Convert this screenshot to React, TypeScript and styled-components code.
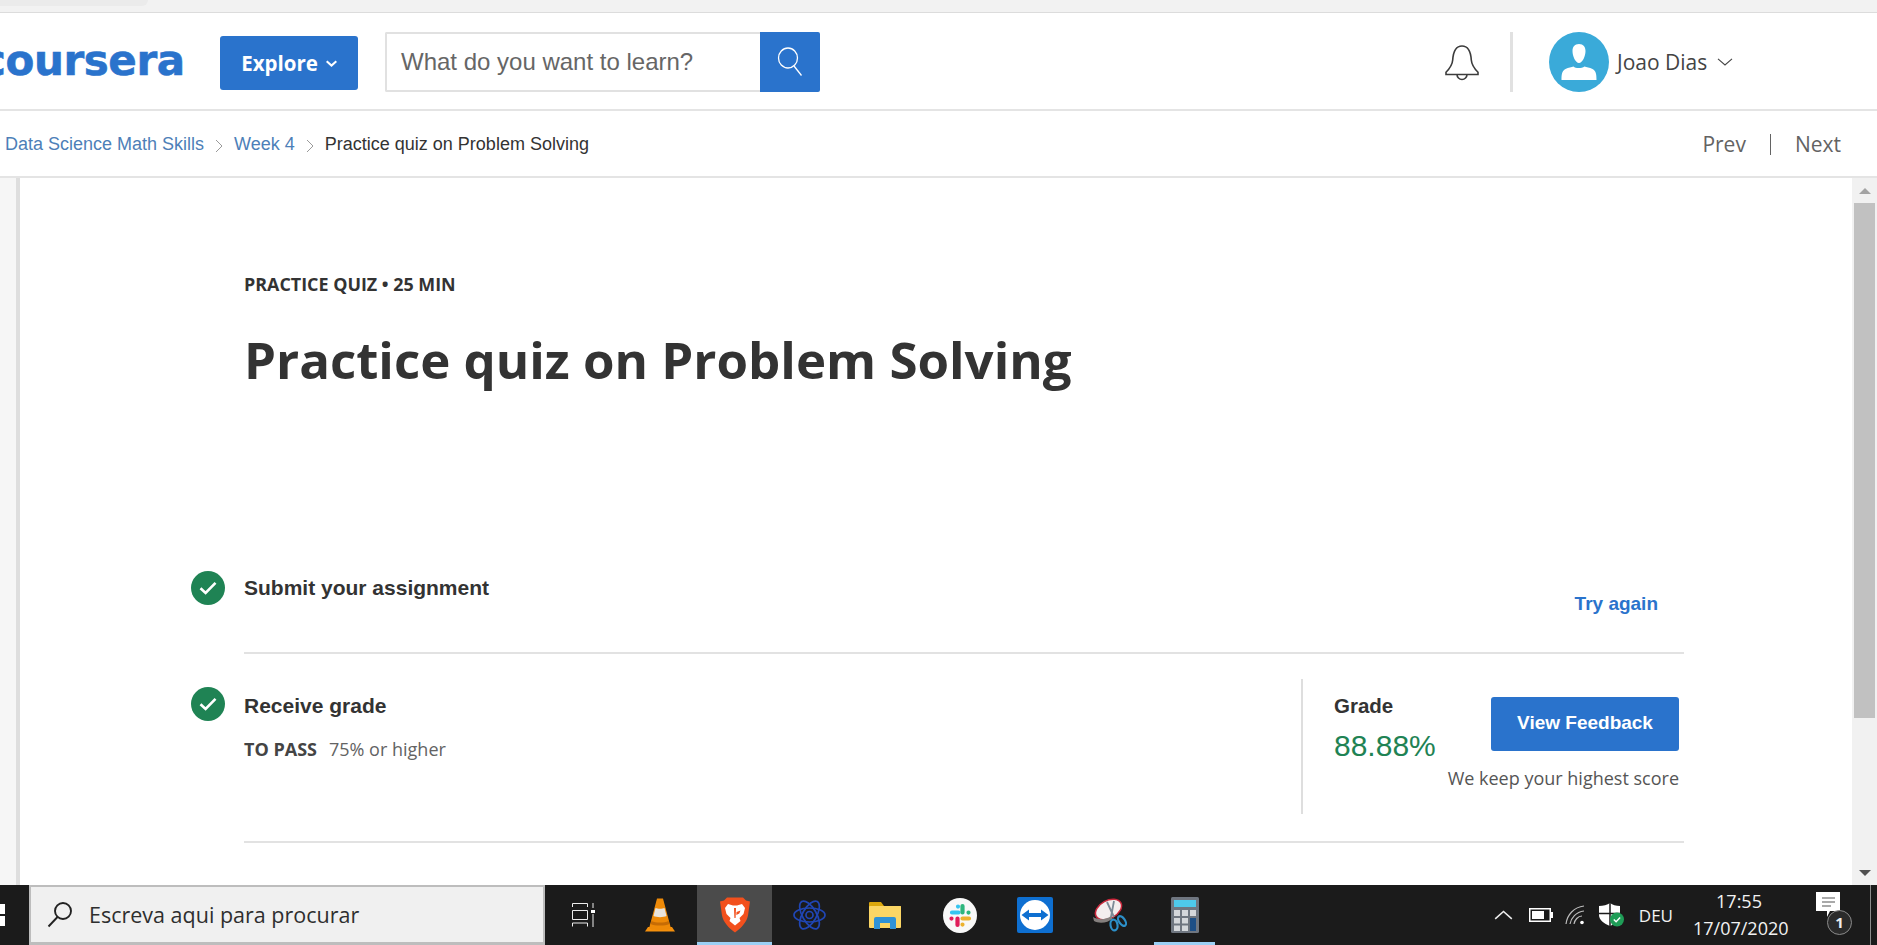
import React from 'react';
import styled, { createGlobalStyle } from 'styled-components';

const GlobalStyle = createGlobalStyle`
	html, body {
		margin: 0;
		padding: 0;
		background: #fff;
		overflow: hidden;
	}
	* {
		box-sizing: border-box;
	}
`;

const sans = `'Open Sans', sans-serif`;
const arial = `'Liberation Sans', Arial, sans-serif`;
const blue = '#2a73cc';
const green = '#1f8354';

const Page = styled.div`
	width: 1877px;
	height: 945px;
	display: flex;
	flex-direction: column;
	overflow: hidden;
`;

const BrowserStrip = styled.div`
	height: 13px;
	flex: none;
	background: #f2f2f2;
	border-bottom: 1px solid #dcdcdc;
`;

const TabStub = styled.div`
	width: 148px;
	height: 6px;
	background: #ebebeb;
	border-radius: 0 0 6px 0;
`;

const Header = styled.header`
	height: 98px;
	flex: none;
	display: flex;
	align-items: flex-start;
	padding-top: 19px;
	border-bottom: 2px solid #e4e4e4;
`;

const Logo = styled.div`
	width: 220px;
	height: 60px;
	flex: none;
	overflow: hidden;
	white-space: nowrap;
	font-family: 'DejaVu Sans', sans-serif;
	font-weight: 700;
	font-size: 42px;
	line-height: 58px;
	letter-spacing: -0.4px;
	color: ${blue};
	-webkit-text-stroke: 0.6px ${blue};
	text-indent: -19px;
`;

const ExploreButton = styled.button`
	width: 138px;
	height: 54px;
	margin: 4px 27px 0 0;
	border: 0;
	border-radius: 3px;
	background: ${blue};
	color: #fff;
	font-family: ${sans};
	font-weight: 700;
	font-size: 20.500px;
	display: flex;
	align-items: center;
	justify-content: center;
	gap: 8px;
	padding: 0;
`;

const SearchBox = styled.div`
	width: 435px;
	height: 60px;
	display: flex;
	flex: none;
`;

const SearchField = styled.div`
	flex: 1;
	border: 2px solid #e1e1e1;
	border-right: 0;
	border-radius: 2px 0 0 2px;
	padding-left: 14px;
	display: flex;
	align-items: center;
	font-family: ${arial};
	font-size: 24px;
	color: #666;
`;

const SearchButton = styled.div`
	width: 60px;
	background: ${blue};
	border-radius: 0 2px 2px 0;
	display: flex;
	align-items: center;
	justify-content: center;
`;

const Account = styled.div`
	margin-left: 624px;
	display: flex;
	align-items: center;
	height: 60px;
`;

const BellWrap = styled.div`
	width: 36px;
	height: 38px;
	margin-top: 2px;
`;

const HeaderRule = styled.div`
	width: 3px;
	height: 60px;
	margin: 0 36px 0 30px;
	background: #e1e1e1;
`;

const UserName = styled.span`
	font-family: ${sans};
	font-size: 21px;
	color: #444;
	margin: 0 10px 0 8px;
`;

const Crumbs = styled.nav`
	height: 67px;
	flex: none;
	display: flex;
	align-items: center;
	padding: 1px 36px 0 5px;
	border-bottom: 2px solid #e4e4e4;
	font-family: ${arial};
	font-size: 18px;
`;

const CrumbLink = styled.a`
	color: #4d7fb8;
`;

const CrumbCurrent = styled.span`
	color: #333;
`;

const CrumbSep = styled.span`
	width: 30px;
	display: flex;
	justify-content: center;
	padding-top: 3px;
`;

const Pager = styled.div`
	margin-left: auto;
	display: flex;
	align-items: center;
	font-family: ${sans};
	font-size: 21px;
	color: #636363;
`;

const PagerBar = styled.span`
	width: 1px;
	height: 21px;
	background: #636363;
	margin: 0 24px;
`;

const Body = styled.div`
	flex: 1;
	min-height: 0;
	display: flex;
`;

const Rail = styled.div`
	width: 20px;
	flex: none;
	background: #f6f6f6;
	border-right: 4px solid #dedede;
`;

const Main = styled.main`
	flex: 1;
	padding: 96px 168px 0 171px;
`;

const Intro = styled.div`
	padding-left: 53px;
	height: 297px;
`;

const Kicker = styled.div`
	font-family: ${sans};
	font-weight: 700;
	font-size: 17.900px;
	line-height: 20px;
	color: #333;
`;

const Title = styled.h1`
	margin: 29px 0 0;
	font-family: ${sans};
	font-weight: 700;
	font-size: 51px;
	line-height: 72px;
	color: #333;
`;

const Step = styled.section`
	display: flex;
	gap: 19px;
`;

const CheckDot = styled.div<{ $top: number }>`
	width: 34px;
	height: 34px;
	flex: none;
	margin-top: ${(p) => p.$top}px;
	border-radius: 50%;
	background: ${green};
	display: flex;
	align-items: center;
	justify-content: center;
`;

const StepBody = styled.div<{ $height: number }>`
	flex: 1;
	height: ${(p) => p.$height}px;
	border-bottom: 2px solid #e2e2e2;
	display: flex;
	justify-content: space-between;
`;

const StepTitle = styled.div<{ $top: number }>`
	margin-top: ${(p) => p.$top}px;
	font-family: ${arial};
	font-weight: 700;
	font-size: 21px;
	line-height: 24px;
	color: #333;
`;

const TryAgain = styled.a`
	margin: 21px 26px 0 0;
	font-family: ${arial};
	font-weight: 700;
	font-size: 19px;
	line-height: 24px;
	color: ${blue};
`;

const PassLine = styled.div`
	margin-top: 19px;
	font-family: ${sans};
	font-size: 18px;
	line-height: 24px;
	color: #636363;
`;

const PassLabel = styled.b`
	color: #444;
	margin-right: 12px;
`;

const GradePanel = styled.div`
	width: 383px;
	height: 135px;
	margin-top: 25px;
	padding: 0 5px 0 31px;
	border-left: 2px solid #dedede;
	display: flex;
	justify-content: space-between;
`;

const GradeLabel = styled.div`
	margin-top: 15px;
	font-family: ${arial};
	font-weight: 700;
	font-size: 20.500px;
	line-height: 24px;
	color: #333;
`;

const GradeValue = styled.div`
	margin-top: 10px;
	font-family: ${arial};
	font-size: 30px;
	line-height: 36px;
	color: ${green};
`;

const GradeAction = styled.div`
	display: flex;
	flex-direction: column;
	align-items: flex-end;
	padding-top: 18px;
`;

const FeedbackButton = styled.button`
	width: 188px;
	height: 54px;
	border: 0;
	padding: 0 0 2px;
	border-radius: 3px;
	background: ${blue};
	color: #fff;
	font-family: ${arial};
	font-weight: 700;
	font-size: 19px;
`;

const KeepNote = styled.div`
	margin-top: 15px;
	font-family: ${sans};
	font-size: 18px;
	line-height: 24px;
	white-space: nowrap;
	color: #555;
`;

const Scrollbar = styled.div`
	width: 25px;
	flex: none;
	background: #f1f1f1;
	display: flex;
	flex-direction: column;
	align-items: center;
	justify-content: space-between;
	position: relative;
`;

const ScrollArrow = styled.div<{ $down?: boolean }>`
	height: 25px;
	display: flex;
	align-items: center;
	&::before {
		content: '';
		border-left: 6px solid transparent;
		border-right: 6px solid transparent;
		${(p) => (p.$down ? 'border-top: 6px solid #505050;' : 'border-bottom: 6px solid #a3a3a3;')}
	}
`;

const ScrollThumb = styled.div`
	position: absolute;
	top: 25px;
	left: 2px;
	width: 21px;
	height: 515px;
	background: #c1c1c1;
`;

const Taskbar = styled.footer`
	height: 60px;
	flex: none;
	background: #1b1b1b;
	display: flex;
	align-items: stretch;
	font-family: ${sans};
	color: #f2f2f2;
	position: relative;
`;

const StartStub = styled.div`
	width: 29px;
	flex: none;
	display: flex;
	align-items: center;
`;

const TaskSearch = styled.div`
	width: 516px;
	flex: none;
	background: #f0f0f0;
	border: 2px solid #bdbdbd;
	border-bottom-width: 3px;
	display: flex;
	align-items: center;
	padding-left: 16px;
	gap: 16px;
	font-size: 21.500px;
	color: #2e2e2e;
`;

const TaskViewSlot = styled.div`
	width: 77px;
	flex: none;
	display: flex;
	align-items: center;
	justify-content: center;
`;

const AppSlot = styled.div<{ $active?: boolean; $open?: boolean; $inset?: number }>`
	width: ${(p) => 75 - 2 * (p.$inset || 0)}px;
	margin: 0 ${(p) => p.$inset || 0}px;
	flex: none;
	display: flex;
	align-items: center;
	justify-content: center;
	padding-top: 3px;
	background: ${(p) => (p.$active ? '#4b4b4b' : 'transparent')};
	border-bottom: 3px solid ${(p) => (p.$open ? '#9bd0f5' : 'transparent')};
`;

const Tray = styled.div`
	margin-left: auto;
	display: flex;
	align-items: center;
	padding-right: 24px;
`;

const TrayIcon = styled.div<{ $gap: number }>`
	display: flex;
	margin-right: ${(p) => p.$gap}px;
`;

const TrayLang = styled.span`
	font-size: 17px;
	margin-right: 20px;
`;

const Clock = styled.div`
	width: 92px;
	text-align: center;
	font-size: 18px;
	line-height: 27px;
	white-space: nowrap;
	margin-right: 31px;
`;

const Notify = styled.div`
	width: 37px;
	height: 46px;
	position: relative;
`;

const NotifyBadge = styled.div`
	position: absolute;
	left: 11px;
	top: 18px;
	width: 25px;
	height: 25px;
	border-radius: 50%;
	background: #2b2b2b;
	border: 1.5px solid #8a8a8a;
	font-size: 15px;
	font-weight: 700;
	line-height: 22px;
	text-align: center;
	color: #eee;
`;

const EdgeLine = styled.div`
	position: absolute;
	right: 6px;
	top: 0;
	bottom: 0;
	width: 1px;
	background: #8c8c8c;
`;

const Check = () => (
	<svg width='20' height='16' viewBox='0 0 20 16' fill='none' stroke='#fff' strokeWidth='2.6'>
		<path d='M2.5 8.2 7.6 13 17.5 2.8' />
	</svg>
);

const Chevron = ({ w, h, color, sw, up }: { w: number; h: number; color: string; sw: number; up?: boolean }) => (
	<svg width={w} height={h} viewBox='0 0 16 8' fill='none' stroke={color} strokeWidth={sw}>
		<path d={up ? 'M1 7.200 8 1l7 6.200' : 'M1 .8 8 7 15 .8'} />
	</svg>
);

const Loupe = () => (
	<svg width='26' height='30' viewBox='0 0 26 30' fill='none' stroke='#fff' strokeWidth='1.300'>
		<ellipse cx='11' cy='11' rx='9.500' ry='10' />
		<path d='M17 19l7.500 9.500' />
	</svg>
);

const Bell = () => (
	<svg width='36' height='38' viewBox='0 0 36 38' fill='none' stroke='#3c3c3c' strokeWidth='1.6'>
		<path d='M2 30.500h32v-2.200c-3.500-3.600-6.300-7-6.700-12.300C26.800 8.500 24.500 2 18 2S9.200 8.500 8.700 16c-.4 5.300-3.200 8.700-6.700 12.300z' />
		<path d='M13 30.500a5 5 0 0 0 10 0' />
	</svg>
);

const Avatar = () => (
	<svg width='60' height='60' viewBox='0 0 60 60'>
		<circle cx='30' cy='30' r='30' fill='#3aaad9' />
		<path
			fill='#fff'
			d='M30 12c-4.500 0-6.500 3-6.500 7 0 5 3 12 6.500 12s6.500-7 6.500-12c0-4-2-7-6.500-7zM12.500 48c0-6 .5-9 4-11 3-1.500 6-2 8-2.500 2 2 8 2 11 0 2 .5 5 1 8 2.500 3.500 2 4 5 4 11z'
		/>
	</svg>
);

const CrumbArrow = () => (
	<svg width='8' height='14' viewBox='0 0 8 14' fill='none' stroke='#9a9a9a' strokeWidth='1'>
		<path d='M1 1l6 6-6 6' />
	</svg>
);

const LoupeDark = () => (
	<svg width='26' height='27' viewBox='0 0 26 27' fill='none' stroke='#222' strokeWidth='1.900'>
		<circle cx='16' cy='10' r='8' />
		<path d='M10.500 16 1.500 25.500' />
	</svg>
);

const WinStub = () => (
	<svg width='5' height='22' viewBox='0 0 5 22' fill='#fff'>
		<rect y='0' width='5' height='10' />
		<rect y='12' width='5' height='10' />
	</svg>
);

const TaskView = () => (
	<svg width='24' height='24' viewBox='0 0 24 24' fill='none' stroke='#eee' strokeWidth='1'>
		<path d='M.5 4V.5h15V4M.5 7.500h15v9H.5zM.5 23.500V20h15v3.500M21 0v5M21 11v13' />
		<rect x='19' y='7' width='4' height='3' fill='#fff' stroke='none' />
	</svg>
);

const Vlc = () => (
	<svg width='30' height='34' viewBox='0 0 30 34'>
		<path fill='#f5900c' d='M3 29h24l3 4.500H0z' />
		<path fill='#ee8a08' d='M12 .5h6l8 30c-3 2-19 2-22 0z' />
		<path fill='#e9e4dc' d='M10.500 10c2 1 7 1 9 0l2 8c-3 1.500-10 1.500-13 0z' />
		<path fill='#c66c05' d='M6.500 23c4 2 13 2 17 0l.8 3c-4 2-14.600 2-18.600 0z' />
	</svg>
);

const Brave = () => (
	<svg width='34' height='36' viewBox='0 0 34 36'>
		<path fill='#f2501d' d='M9 .5h16l3 3 4 1-2 14c-1 6-7 13-13 17C11 31.500 5 24.500 4 18.500l-2-14 4-1z' />
		<path
			fill='#fff'
			d='M10 7l5 1.500h4L24 7l3 4-1.500 6-4 4 1 3-5.500 4.500L11.500 24l1-3-4-4L7 11zM11.500 13.500l4 1.500.2 3-3-1.500zM22.500 13.500l-4 1.500-.2 3 3-1.500z'
		/>
		<path fill='#f2501d' d='M16 11h2l-.4 10h-1.200z' />
	</svg>
);

const Atom = () => (
	<svg width='33' height='30' viewBox='0 0 33 30' fill='none' stroke='#2046b4' strokeWidth='1.700'>
		<ellipse cx='16.500' cy='15' rx='15.500' ry='7' />
		<ellipse cx='16.500' cy='15' rx='15.500' ry='7' transform='rotate(60 16.500 15)' />
		<ellipse cx='16.500' cy='15' rx='15.500' ry='7' transform='rotate(120 16.500 15)' />
		<circle cx='16.500' cy='15' r='3.500' />
	</svg>
);

const Folder = () => (
	<svg width='32' height='27' viewBox='0 0 32 27'>
		<path fill='#dba70d' d='M0 1a1 1 0 0 1 1-1h11l3 4h17v6H0z' />
		<rect y='4' width='32' height='22' rx='1' fill='#fbd665' />
		<path fill='#2f92d6' d='M5 27V17a2 2 0 0 1 2-2h18a2 2 0 0 1 2 2v10h-6v-6H11v6z' />
	</svg>
);

const Slack = () => (
	<svg width='34' height='35' viewBox='0 0 34 35'>
		<ellipse cx='17' cy='17.500' rx='17' ry='17.500' fill='#f8f8f8' />
		<g fill='none' strokeWidth='4.200' strokeLinecap='round'>
			<path stroke='#36c5f0' d='M9 14.500h6.500M15 8.500v.1' />
			<path stroke='#2eb67d' d='M19.500 8v6.500M25.500 14.500v.1' />
			<path stroke='#e01e5a' d='M14.500 20.500V27M8.500 20.500v.1' />
			<path stroke='#ecb22e' d='M19.500 20.500H26M19.500 26.500v.1' />
		</g>
	</svg>
);

const TeamViewer = () => (
	<svg width='36' height='36' viewBox='0 0 36 36'>
		<rect width='36' height='36' rx='2' fill='#0e6fd1' />
		<circle cx='18' cy='18' r='15' fill='#fff' />
		<path fill='#0e6fd1' d='M4.500 18 12 12.500V16h12v-3.500l7.500 5.500-7.500 5.500V20H12v3.500z' />
	</svg>
);

const Snip = () => (
	<svg width='34' height='34' viewBox='0 0 34 34'>
		<ellipse cx='15.500' cy='11.500' rx='14' ry='9' transform='rotate(-28 15.500 11.500)' fill='#f3eeee' stroke='#c9283c' strokeWidth='1.500' />
		<path fill='#85807e' d='M0 19c5 3 13 3 18-1l1.500 2.500C15 25 6 26 1 23z' />
		<path fill='none' stroke='#7c8a96' strokeWidth='1.800' d='M14 4l7 15M21 3l-3 16' />
		<g fill='none' stroke='#2c8fc8' strokeWidth='2.200'>
			<ellipse cx='21' cy='27' rx='3.500' ry='5.500' transform='rotate(-10 21 27)' />
			<ellipse cx='29' cy='23' rx='3' ry='5.500' transform='rotate(-35 29 23)' />
		</g>
	</svg>
);

const Calc = () => (
	<svg width='28' height='36' viewBox='0 0 28 36'>
		<rect width='28' height='36' rx='1.500' fill='#6f7680' />
		<rect x='3' y='3' width='22' height='7' fill='#4ec9ea' />
		<g fill='#d4d7db'>
			<rect x='3' y='13' width='6' height='6' />
			<rect x='11' y='13' width='6' height='6' />
			<rect x='19' y='13' width='6' height='6' />
			<rect x='3' y='21' width='6' height='5.500' />
			<rect x='11' y='21' width='6' height='5.500' />
			<rect x='3' y='28.500' width='6' height='5.500' />
			<rect x='11' y='28.500' width='6' height='5.500' />
		</g>
		<rect x='19' y='21' width='6' height='13' fill='#1d4f86' />
	</svg>
);

const Battery = () => (
	<svg width='24' height='14' viewBox='0 0 24 14'>
		<rect x='.75' y='.75' width='20.500' height='12.500' fill='none' stroke='#fff' strokeWidth='1.500' />
		<rect x='3' y='3' width='12' height='8' fill='#fff' />
		<rect x='22' y='4' width='2' height='6' fill='#fff' />
	</svg>
);

const Wifi = () => (
	<svg width='20' height='20' viewBox='0 0 20 20' fill='none' stroke='#bdbdbd' strokeWidth='1.200'>
		<path d='M1 19C2 10 9 2 19 1M5 19c1-6 6-12 14-13M9 19c.6-4 4-8 8-8' />
		<circle cx='17' cy='17.500' r='1.800' fill='#fff' stroke='none' />
	</svg>
);

const Shield = () => (
	<svg width='26' height='24' viewBox='0 0 26 24'>
		<path fill='#fff' d='M11 0c2.500 2 6 3 10 3v9c0 5-4 8.500-10 11C5 20.500 0 17 0 12V3c4 0 8.500-1 11-3z' />
		<path stroke='#1b1b1b' strokeWidth='1.500' d='M11 0v23M0 10.500h21' />
		<circle cx='18' cy='16.500' r='7' fill='#1f9d57' />
		<path fill='none' stroke='#fff' strokeWidth='1.400' d='M14.800 16.500l2.300 2.300 4-4.300' />
	</svg>
);

const Bubble = () => (
	<svg width='25' height='26' viewBox='0 0 25 26'>
		<path fill='#fff' d='M0 0h24v19H14l-3 6v-6H0z' />
		<path stroke='#555' strokeWidth='1.200' d='M6 6h13M6 10h13M6 14h9' />
	</svg>
);

const apps = [
	{ key: 'vlc', icon: <Vlc /> },
	{ key: 'brave', icon: <Brave />, active: true, open: true },
	{ key: 'atom', icon: <Atom /> },
	{ key: 'folder', icon: <Folder /> },
	{ key: 'slack', icon: <Slack /> },
	{ key: 'teamviewer', icon: <TeamViewer /> },
	{ key: 'snip', icon: <Snip /> },
	{ key: 'calc', icon: <Calc />, open: true, inset: 7 },
];

const App = () => {
	return (
		<>
			<GlobalStyle />
			<Page>
				<BrowserStrip>
					<TabStub />
				</BrowserStrip>
				<Header>
					<Logo>coursera</Logo>
					<ExploreButton>
						Explore
						<Chevron w={11} h={7} color='#fff' sw={3} />
					</ExploreButton>
					<SearchBox>
						<SearchField>What do you want to learn?</SearchField>
						<SearchButton>
							<Loupe />
						</SearchButton>
					</SearchBox>
					<Account>
						<BellWrap>
							<Bell />
						</BellWrap>
						<HeaderRule />
						<Avatar />
						<UserName>Joao Dias</UserName>
						<Chevron w={16} h={8} color='#444' sw={1.100} />
					</Account>
				</Header>
				<Crumbs>
					<CrumbLink>Data Science Math Skills</CrumbLink>
					<CrumbSep>
						<CrumbArrow />
					</CrumbSep>
					<CrumbLink>Week 4</CrumbLink>
					<CrumbSep>
						<CrumbArrow />
					</CrumbSep>
					<CrumbCurrent>Practice quiz on Problem Solving</CrumbCurrent>
					<Pager>
						Prev
						<PagerBar />
						Next
					</Pager>
				</Crumbs>
				<Body>
					<Rail />
					<Main>
						<Intro>
							<Kicker>PRACTICE QUIZ • 25 MIN</Kicker>
							<Title>Practice quiz on Problem Solving</Title>
						</Intro>
						<Step>
							<CheckDot $top={0}>
								<Check />
							</CheckDot>
							<StepBody $height={83}>
								<StepTitle $top={5}>Submit your assignment</StepTitle>
								<TryAgain>Try again</TryAgain>
							</StepBody>
						</Step>
						<Step>
							<CheckDot $top={33}>
								<Check />
							</CheckDot>
							<StepBody $height={189}>
								<div>
									<StepTitle $top={40}>Receive grade</StepTitle>
									<PassLine>
										<PassLabel>TO PASS</PassLabel>
										75% or higher
									</PassLine>
								</div>
								<GradePanel>
									<div>
										<GradeLabel>Grade</GradeLabel>
										<GradeValue>88.88%</GradeValue>
									</div>
									<GradeAction>
										<FeedbackButton>View Feedback</FeedbackButton>
										<KeepNote>We keep your highest score</KeepNote>
									</GradeAction>
								</GradePanel>
							</StepBody>
						</Step>
					</Main>
					<Scrollbar>
						<ScrollArrow />
						<ScrollThumb />
						<ScrollArrow $down />
					</Scrollbar>
				</Body>
				<Taskbar>
					<StartStub>
						<WinStub />
					</StartStub>
					<TaskSearch>
						<LoupeDark />
						Escreva aqui para procurar
					</TaskSearch>
					<TaskViewSlot>
						<TaskView />
					</TaskViewSlot>
					{apps.map((a) => (
						<AppSlot key={a.key} $active={a.active} $open={a.open} $inset={a.inset}>
							{a.icon}
						</AppSlot>
					))}
					<Tray>
						<TrayIcon $gap={16}>
							<Chevron w={19} h={10} color='#eee' sw={1.300} up />
						</TrayIcon>
						<TrayIcon $gap={12}>
							<Battery />
						</TrayIcon>
						<TrayIcon $gap={14}>
							<Wifi />
						</TrayIcon>
						<TrayIcon $gap={14}>
							<Shield />
						</TrayIcon>
						<TrayLang>DEU</TrayLang>
						<Clock>
							17:55
							<br />
							17/07/2020
						</Clock>
						<Notify>
							<Bubble />
							<NotifyBadge>1</NotifyBadge>
						</Notify>
					</Tray>
					<EdgeLine />
				</Taskbar>
			</Page>
		</>
	);
};

export default App;
